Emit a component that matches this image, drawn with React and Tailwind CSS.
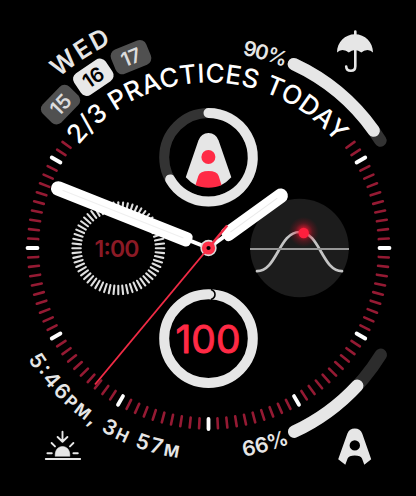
import React from "react";

const CX = 208.5;
const CY = 248;

// Point on a circle, with the angle in degrees clockwise from 12 o'clock.
function polar(r, deg, cx = CX, cy = CY) {
  const a = (deg * Math.PI) / 180;
  return [cx + r * Math.sin(a), cy - r * Math.cos(a)];
}

function arc(r, from, to, cx = CX, cy = CY) {
  const [x1, y1] = polar(r, from, cx, cy);
  const [x2, y2] = polar(r, to, cx, cy);
  const large = Math.abs(to - from) > 180 ? 1 : 0;
  const sweep = to > from ? 1 : 0;
  return `M${x1} ${y1}A${r} ${r} 0 ${large} ${sweep} ${x2} ${y2}`;
}

function ArcText({ id, r, from, to, children, className }) {
  const length = (Math.abs(to - from) * Math.PI * r) / 180;
  const extra = to > from ? 12 : -12;
  return (
    <>
      <path id={id} d={arc(r, from, to + extra)} fill="none" />
      <text className={className}>
        <textPath href={`#${id}`} textLength={length} lengthAdjust="spacing">
          {children}
        </textPath>
      </text>
    </>
  );
}

function Ticks() {
  const angles = [];
  for (let a = 54; a <= 306; a += 3) angles.push(a);
  return (
    <g strokeLinecap="round">
      {angles.map((a) => {
        const major = a % 30 === 0;
        const [x1, y1] = polar(major ? 171 : 170.5, a);
        const [x2, y2] = polar(major ? 181 : 180.5, a);
        return (
          <line
            key={a}
            x1={x1}
            y1={y1}
            x2={x2}
            y2={y2}
            className={major ? "stroke-white" : "stroke-[#951a33]"}
            strokeWidth={major ? 3.8 : 2.6}
          />
        );
      })}
    </g>
  );
}

function DateBadge({ angle, day, active }) {
  const [x, y] = polar(206, angle);
  return (
    <g transform={`translate(${x} ${y}) rotate(${angle})`}>
      <rect x="-19" y="-13" width="38" height="26" rx="7" className={active ? "fill-[#e8e8e8]" : "fill-[#505050]"} />
      <text
        y="7.2"
        textAnchor="middle"
        className={active ? "fill-black text-[20px] font-semibold" : "fill-[#dcdcdc] text-[20px] font-semibold"}
      >
        {day}
      </text>
    </g>
  );
}

function Timer() {
  const ticks = Array.from({ length: 60 }, (_, i) => i * 6);
  return (
    <g>
      {ticks.map((a) => {
        const [x1, y1] = polar(37.5, a, 118.3, 248.3);
        const [x2, y2] = polar(46, a, 118.3, 248.3);
        return <line key={a} x1={x1} y1={y1} x2={x2} y2={y2} className="stroke-[#e0e0e0]" strokeWidth="2.1" strokeLinecap="round" />;
      })}
      <text x="117" y="256.6" textAnchor="middle" textLength="45" className="fill-[#8b1a25] text-[23px] font-semibold">
        1:00
      </text>
    </g>
  );
}

function Solar() {
  return (
    <g>
      <defs>
        <radialGradient id="glow">
          <stop offset="0.3" stopColor="#ff1530" stopOpacity="0.65" />
          <stop offset="0.6" stopColor="#e01028" stopOpacity="0.25" />
          <stop offset="1" stopColor="#c00018" stopOpacity="0" />
        </radialGradient>
      </defs>
      <circle cx="299.5" cy="248" r="49.3" className="fill-[#1c1c1c]" />
      <path
        d="M257 271.2C277 271.2 279 232 299.5 232S322 271.2 342 271.2"
        fill="none"
        className="stroke-[#c4c4c4]"
        strokeWidth="2.7"
        strokeLinecap="round"
      />
      <path d="M250 249H349" className="stroke-[#979797]" strokeWidth="2" />
      <circle cx="303.7" cy="232" r="15" fill="url(#glow)" />
      <circle cx="303.7" cy="233" r="5.2" className="fill-[#ff1f3d]" />
    </g>
  );
}

function Rings() {
  return (
    <g fill="none" strokeWidth="10" strokeLinecap="round">
      <circle cx="208.5" cy="157.3" r="44.3" className="stroke-[#333333]" />
      <path d={arc(44.3, 0, 240, 208.5, 157.3)} className="stroke-[#e6e6e6]" />
      <circle cx="208.5" cy="338.6" r="44.3" className="stroke-[#e6e6e6]" />
      <path d="M211 289.6Q215 291 215 294.5T211 299.4" className="stroke-black" strokeWidth="1.6" strokeLinecap="butt" />
    </g>
  );
}

function PodcastLarge() {
  return (
    <g>
      <path
        d="M185.8 177.2L198.4 140.5Q201.2 133 208.5 133Q215.8 133 218.6 140.5L231.3 177.2Q227 182 221 185.3L196 185.3Q190 182 185.8 177.2Z"
        className="fill-[#e6e6e6]"
      />
      <circle cx="208.4" cy="157" r="7" className="fill-[#ff2a45]" />
      <path
        d="M195.5 185L198.3 176Q200 171 208.5 171Q217 171 218.7 176L221.5 185Q216 187.8 208.5 187.8Q201 187.8 195.5 185Z"
        className="fill-[#ff2a45]"
      />
    </g>
  );
}

function PodcastSmall() {
  return (
    <path
      fillRule="evenodd"
      d="M338.2 459.3L347.4 433.6Q349.4 428.6 354.8 428.6Q360.2 428.6 362.2 433.6L371.2 459.3L364.3 464.7L362 458.6Q360.8 455.6 354.8 455.6Q348.8 455.6 347.6 458.6L345.3 464.7ZM349.6 445.4a5.2 5.2 0 1 0 10.4 0a5.2 5.2 0 1 0 -10.4 0Z"
      className="fill-[#e6e6e6]"
    />
  );
}

function Umbrella() {
  return (
    <g>
      <path
        d="M337 52.6C337 42 345 34.2 355 34.2S373 42 373 52.6Q370.8 50 367.5 50Q363.8 50 361.3 52.6Q358.5 50 355 50Q351.5 50 348.8 52.6Q346.3 50 342.5 50Q339.2 50 337 52.6Z"
        className="fill-[#e6e6e6]"
      />
      <path
        d="M355.3 31.5V66.2Q355.3 70.8 350.8 70.8Q346.4 70.8 346.2 66.5"
        fill="none"
        className="stroke-[#e6e6e6]"
        strokeWidth="2.6"
        strokeLinecap="round"
      />
    </g>
  );
}

function Sunset() {
  return (
    <g fill="none" className="stroke-[#e6e6e6]" strokeWidth="1.9" strokeLinecap="round" strokeLinejoin="round">
      <path d="M62.5 431.8V441.6M57.6 437L62.5 441.8L67.4 437M51.6 443L55 446.4M73.4 443L70 446.4M47.4 453.2H51.8M73.4 453.2H77.8M45.8 459H80.2" />
      <path d="M55.2 456C54.8 450.2 58 446.6 62.5 446.6S70.2 450.2 69.8 456Z" className="fill-[#e6e6e6]" strokeWidth="0.6" />
    </g>
  );
}

function Gauges() {
  return (
    <g fill="none" strokeWidth="12.4" strokeLinecap="round">
      <path d={arc(202.7, 24.9, 58)} className="stroke-[#333333]" />
      <path d={arc(202.7, 24.9, 54.6)} className="stroke-[#e6e6e6]" />
      <path d={arc(202.7, 155, 121.8)} className="stroke-[#2c2c2c]" />
      <path d={arc(202.7, 155, 132.8)} className="stroke-[#e6e6e6]" />
    </g>
  );
}

function Hands() {
  return (
    <g>
      <g transform={`translate(${CX} ${CY}) rotate(-68.4)`}>
        <path d="M0 0V-24" className="stroke-white" strokeWidth="4" />
        <path d="M-7.3 -24Q-7.3 -19 -3 -18.4H3Q7.3 -19 7.3 -24V-161.5A7.3 7.3 0 0 0 -7.3 -161.5Z" className="fill-white" />
        <path d="M0 -27V-157" className="stroke-[#efefef]" strokeWidth="1" />
      </g>
      <g transform={`translate(${CX} ${CY}) rotate(54.1)`}>
        <path d="M0 0V-24" className="stroke-white" strokeWidth="4" />
        <path d="M-7.3 -24Q-7.3 -19 -3 -18.4H3Q7.3 -19 7.3 -24V-89A7.3 7.3 0 0 0 -7.3 -89Z" className="fill-white" />
        <path d="M0 -27V-85" className="stroke-[#e9e9e9]" strokeWidth="1" />
      </g>
      <circle cx={CX} cy={CY} r="8.2" className="fill-[#dedede]" />
      <path d="M208.5 248L95 384.5" className="stroke-[#f02b45]" strokeWidth="1.9" />
      <path d="M208.5 248L227.2 225.5" className="stroke-[#f02b45]" strokeWidth="2.6" />
      <circle cx={CX} cy={CY} r="6.6" className="fill-[#ff3048]" />
      <circle cx={CX} cy={CY} r="2.1" className="fill-black" />
    </g>
  );
}

export default function App() {
  return (
    <main className="h-[496px] w-[416px] overflow-hidden bg-black font-['Inter',sans-serif]">
      <svg width="416" height="496" viewBox="0 0 416 496" className="block">
        <Ticks />
        <Gauges />

        <ArcText id="weekday" r={226.5} from={-41.3} to={-25.4} className="fill-[#e6e6e6] text-[25px] font-semibold">
          WED
        </ArcText>
        <DateBadge angle={-45.9} day="15" />
        <DateBadge angle={-34} day="16" active />
        <DateBadge angle={-22.1} day="17" />
        <ArcText id="practices" r={165.5} from={-51.6} to={50.4} className="fill-white text-[26px] font-medium">
          2/3 PRACTICES TODAY
        </ArcText>
        <ArcText id="rain" r={196} from={9.9} to={22.8} className="fill-[#e6e6e6] text-[20.5px] font-semibold">
          90%
        </ArcText>
        <ArcText id="progress" r={211.5} from={170.4} to={157.4} className="fill-[#e6e6e6] text-[21px] font-semibold">
          66%
        </ArcText>
        <ArcText id="sunset" r={212} from={238.4} to={188.3} className="fill-[#e6e6e6] text-[21px] font-semibold">
          5:46<tspan className="text-[16.5px] font-bold">PM</tspan>, 3<tspan className="text-[16.5px] font-bold">H</tspan> 57
          <tspan className="text-[16.5px] font-bold">M</tspan>
        </ArcText>

        <Umbrella />
        <Sunset />
        <PodcastSmall />
        <Rings />
        <PodcastLarge />
        <text
          x="208"
          y="353.3"
          textAnchor="middle"
          textLength="65"
          lengthAdjust="spacingAndGlyphs"
          strokeLinejoin="round"
          strokeWidth="0.9"
          className="fill-[#ff2a45] stroke-[#ff2a45] text-[38.5px] font-normal"
        >
          100
        </text>
        <Timer />
        <Solar />
        <Hands />
      </svg>
    </main>
  );
}
